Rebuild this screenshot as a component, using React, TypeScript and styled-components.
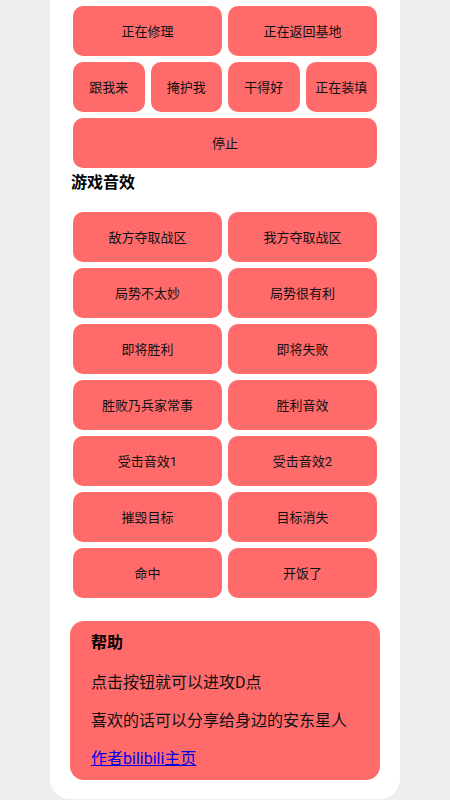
import React from "react";
import styled, { createGlobalStyle } from "styled-components";

const Global = createGlobalStyle`
  html, body { margin: 0; padding: 0; background: #eeeeee; }
  body { font-family: Roboto, "Noto Sans CJK SC", sans-serif; }
`;

const Page = styled.div`
  display: flex;
  justify-content: center;
  padding-bottom: 2px;
`;

const Panel = styled.main`
  width: 350px;
  box-sizing: border-box;
  background: #ffffff;
  padding: 3px 20px 19px;
  border-radius: 0 0 20px 20px;
  display: flex;
  flex-direction: column;
`;

const Grid = styled.div<{ $cols: number }>`
  display: grid;
  grid-template-columns: repeat(${(p) => p.$cols}, 1fr);
`;

const Btn = styled.button`
  margin: 3px;
  height: 50px;
  border: none;
  border-radius: 10px;
  background: #ff6b6b;
  color: #111111;
  font-family: Roboto, "Noto Sans CJK SC", sans-serif;
  font-size: 13px;
  padding: 0 0 2px;
  display: flex;
  align-items: center;
  justify-content: center;
`;

const Heading = styled.h3`
  margin: 0 0 14px 1px;
  font-size: 16px;
  line-height: 24px;
  font-weight: 700;
  color: #000;
`;

const HelpCard = styled.section`
  margin-top: 20px;
  background: #ff6b6b;
  border-radius: 14px;
  padding: 11px 21px 10px;
  display: flex;
  flex-direction: column;
  gap: 16px;
`;

const HelpTitle = styled.h4`
  margin: 0 0 2px;
  font-size: 16px;
  line-height: 22px;
  font-weight: 700;
  color: #000;
`;

const HelpText = styled.p`
  margin: 0;
  font-size: 16px;
  line-height: 22px;
  color: #111111;
`;

const Link = styled.a`
  font-size: 16px;
  line-height: 22px;
  color: #0000ee;
  text-decoration: underline;
`;

const row1 = ["正在修理", "正在返回基地"];
const row2 = ["跟我来", "掩护我", "干得好", "正在装填"];
const sounds = [
  "敌方夺取战区",
  "我方夺取战区",
  "局势不太妙",
  "局势很有利",
  "即将胜利",
  "即将失败",
  "胜败乃兵家常事",
  "胜利音效",
  "受击音效1",
  "受击音效2",
  "摧毁目标",
  "目标消失",
  "命中",
  "开饭了",
];

export default function App() {
  return (
    <>
      <Global />
      <Page>
        <Panel>
          <Grid $cols={2}>
            {row1.map((t) => (
              <Btn key={t}>{t}</Btn>
            ))}
          </Grid>
          <Grid $cols={4}>
            {row2.map((t) => (
              <Btn key={t}>{t}</Btn>
            ))}
          </Grid>
          <Grid $cols={1}>
            <Btn>停止</Btn>
          </Grid>
          <Heading>游戏音效</Heading>
          <Grid $cols={2}>
            {sounds.map((t) => (
              <Btn key={t}>{t}</Btn>
            ))}
          </Grid>
          <HelpCard>
            <HelpTitle>帮助</HelpTitle>
            <HelpText>点击按钮就可以进攻D点</HelpText>
            <HelpText>喜欢的话可以分享给身边的安东星人</HelpText>
            <div>
              <Link href="#">作者bilibili主页</Link>
            </div>
          </HelpCard>
        </Panel>
      </Page>
    </>
  );
}
